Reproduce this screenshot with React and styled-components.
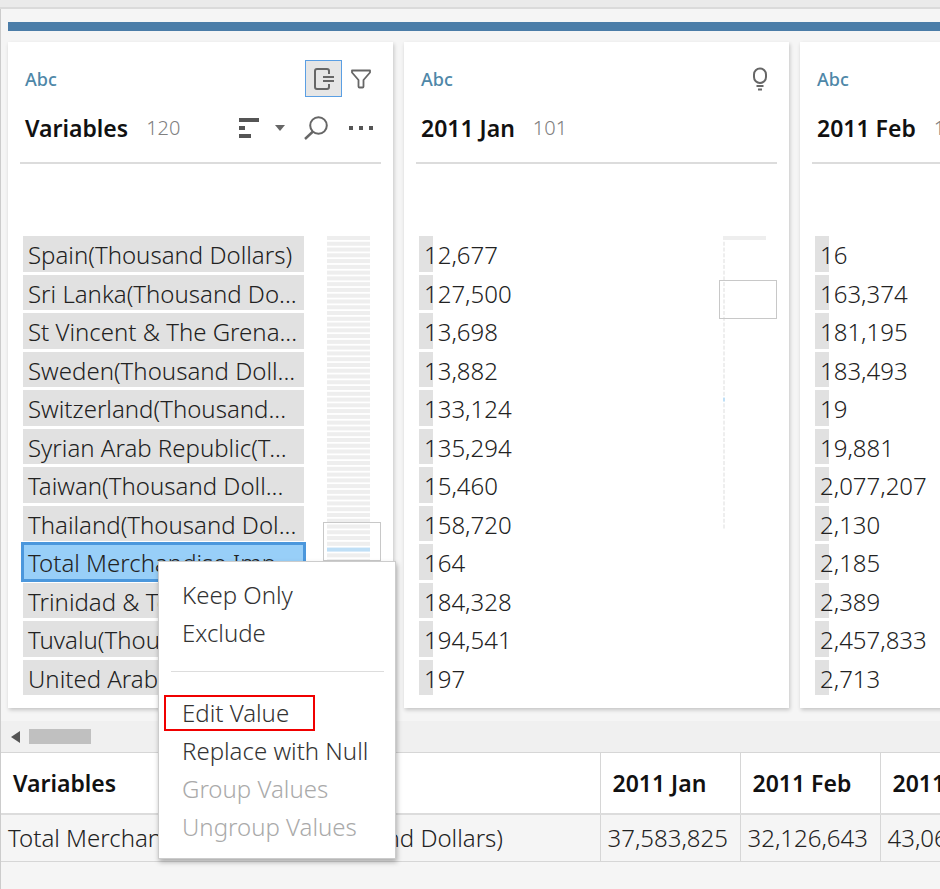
import React from "react";
import styled, { createGlobalStyle, css } from "styled-components";

const GlobalStyle = createGlobalStyle`
  *, *::before, *::after { box-sizing: border-box; }
  body { margin: 0; background: #f5f5f5; overflow-x: hidden; }
  body, button, table { font-family: "Noto Sans", "Open Sans", sans-serif; }
  button { border: 0; padding: 0; background: none; color: inherit; cursor: pointer; }
  ul { list-style: none; margin: 0; padding: 0; }
  svg { display: block; }
`;

const Page = styled.div`
  display: flex;
  flex-direction: column;
  min-height: 100vh;
  overflow: hidden;
  color: #333;
  font-size: 24px;
  line-height: 34px;
  font-weight: 300;
`;

const TopBand = styled.div`
  height: 9px;
  background: #eaeaea;
  border-bottom: 2px solid #dadada;
`;

const Workspace = styled.main`
  flex: 1;
  border-left: 1px solid #ccc;
`;

const ProfilePane = styled.section`
  padding: 13px 0 13px 7px;
`;

const StepStripe = styled.div`
  height: 9px;
  background: #4b7da8;
`;

const Cards = styled.div`
  display: flex;
  gap: 11px;
  padding-top: 11px;
`;

const Card = styled.article`
  flex: none;
  width: 385px;
  padding: 18px 12px 13px;
  background: #fff;
  box-shadow: 1px 2px 4px rgba(0, 0, 0, 0.2);
`;

const CardHead = styled.header`
  padding: 0 2px 14px 5px;
  border-bottom: 2px solid #dcdcdc;
`;

const HeadLine = styled.div`
  display: flex;
  align-items: center;
  height: ${(p) => (p.$lower ? "51px" : "37px")};
  padding-top: ${(p) => (p.$lower ? "10px" : "0")};
`;

const DataType = styled.span`
  margin-right: auto;
  font-size: 18px;
  font-weight: 500;
  color: #4e87a8;
`;

const FieldName = styled.h2`
  margin: 0 18px 0 0;
  font-size: 23px;
  font-weight: 600;
  color: #111;
`;

const Count = styled.span`
  margin-right: auto;
  font-size: 20px;
  color: #808080;
`;

const IconButton = styled.button`
  display: flex;
  align-items: center;
  justify-content: center;
  width: 37px;
  height: 37px;
  color: #666;
  ${(p) =>
    p.$pressed &&
    css`
      background: #e6e6e6;
      border: 1px solid #5b9fe3;
    `}
`;

const SmallButton = styled(IconButton)`
  width: ${(p) => p.$width}px;
`;

const MoreButton = styled(IconButton)`
  width: 45px;
  padding-right: 6px;
  justify-content: flex-end;
`;

const CardBody = styled.div`
  display: flex;
  gap: 19px;
  height: 459px;
  margin: 72px 0 0 3px;
`;

const ValueList = styled.ul`
  flex: 1;
  min-width: 0;
  display: flex;
  flex-direction: column;
  gap: 3px;
`;

const ValueItem = styled.li`
  position: relative;
  flex: 1;
  display: flex;
`;

const ValueButton = styled.button`
  flex: 1;
  min-width: 0;
  padding: 3px 5px 0;
  overflow: hidden;
  text-overflow: ellipsis;
  white-space: nowrap;
  text-align: left;
  font-size: 24px;
  font-weight: 300;
  line-height: 32px;
  color: #222;
  background: linear-gradient(#e1e1e1, #e1e1e1) 0 0 / ${(p) => (p.$full ? "100%" : "14px")} 100% no-repeat;
  ${(p) =>
    p.$selected &&
    css`
      background: #98cff8;
      outline: 3px solid #4b97dc;
      outline-offset: -1px;
    `}
`;

const Menu = styled.div`
  position: absolute;
  z-index: 2;
  top: 17px;
  left: 135px;
  display: flex;
  flex-direction: column;
  width: 238px;
  padding: 14px 0 12px;
  background: #fff;
  border: 1px solid #ccc;
  box-shadow: 1px 3px 5px rgba(0, 0, 0, 0.3);
`;

const MenuItem = styled.button`
  position: relative;
  height: 38px;
  padding: 0 0 2px 23px;
  text-align: left;
  white-space: nowrap;
  font-size: 24px;
  font-weight: 300;
  color: #333;
  &:disabled { color: #aaa; }
`;

const MenuRule = styled.hr`
  width: 213px;
  margin: 19px 12px 22px;
  border: 0;
  border-top: 1px solid #ddd;
`;

const Callout = styled.span`
  position: absolute;
  top: 1px;
  left: 5px;
  width: 151px;
  height: 36px;
  border: 2px solid #f00000;
`;

const ScrollTrack = styled.div`
  display: flex;
  align-items: center;
  gap: 9px;
  height: 31px;
  padding-left: 10px;
  background: #f0f0f0;
`;

const ScrollArrow = styled.button`
  color: #555;
`;

const ScrollThumb = styled.div`
  width: 62px;
  height: 15px;
  background: #c0c0c0;
`;

const Grid = styled.table`
  table-layout: fixed;
  width: 1019px;
  border-collapse: collapse;
  border-top: 1px solid #d6d6d6;
`;

const Col = styled.col`
  width: ${(p) => p.$width}px;
`;

const HeadCell = styled.th`
  height: 61px;
  padding: 0 12px;
  text-align: left;
  white-space: nowrap;
  font-size: 23px;
  font-weight: 600;
  color: #111;
  background: #fff;
  border-right: 1px solid #d6d6d6;
  border-bottom: 2px solid #dcdcdc;
`;

const Cell = styled.td`
  height: 48px;
  padding: 0 7px;
  white-space: nowrap;
  color: #222;
  border-right: 1px solid #d6d6d6;
  border-bottom: 1px solid #d6d6d6;
`;

const ExportIcon = () => (
  <svg width="20" height="22" viewBox="0 0 20 22" fill="none" stroke="currentColor" strokeWidth="2">
    <path d="M15 6V3Q15 1 13 1H3Q1 1 1 3V19Q1 21 3 21H13Q15 21 15 19V16" />
    <path d="M9 9h11M9 13h11" />
  </svg>
);

const FilterIcon = () => (
  <svg width="20" height="20" viewBox="0 0 20 20" fill="none" stroke="currentColor" strokeWidth="1.800" strokeLinejoin="round">
    <path d="M1 1.500h18v2L12.500 11v6.500q0 1-1 1h-3q-1 0-1-1V11L1 3.500z" />
  </svg>
);

const BulbIcon = () => (
  <svg width="16" height="24" viewBox="0 0 16 24" fill="none" stroke="currentColor" strokeWidth="2">
    <rect x="2" y="1.500" width="12" height="14.500" rx="6" />
    <path d="M4.500 19h7M6 22.500h4" />
  </svg>
);

const SortIcon = () => (
  <svg width="20" height="20" viewBox="0 0 20 20" fill="#555">
    <path d="M0 0h20v4H0zM0 8h6v4H0zM0 16h12v4H0z" />
  </svg>
);

const CaretIcon = () => (
  <svg width="10" height="6" viewBox="0 0 10 6" fill="currentColor">
    <path d="M0 0h10L5 6z" />
  </svg>
);

const SearchIcon = () => (
  <svg width="24" height="24" viewBox="0 0 24 24" fill="none" stroke="currentColor" strokeWidth="2">
    <circle cx="14.500" cy="9.500" r="8.300" />
    <path d="M9 15.500L1 23" strokeWidth="2.400" />
  </svg>
);

const MoreIcon = () => (
  <svg width="24" height="4" viewBox="0 0 24 4" fill="#555">
    <path d="M0 0h4v4H0zM10 0h4v4h-4zM20 0h4v4h-4z" />
  </svg>
);

const STEP = 5.77;

function Minimap({ rows, marked, windowY, wideRows }) {
  return (
    <svg width="58" height="459" viewBox="0 0 58 459" aria-hidden="true">
      {Array.from({ length: rows }, (_, i) => (
        <rect
          key={i}
          x="4"
          y={i * STEP}
          width={i < wideRows ? 43 : 2}
          height="4"
          fill={i === marked ? "#bfdff6" : "#eeeeee"}
        />
      ))}
      <rect x="0.500" y={windowY + 0.5} width="57" height="38" fill="none" stroke="#c8c8c8" />
    </svg>
  );
}

const variables = [
  "Spain(Thousand Dollars)",
  "Sri Lanka(Thousand Do...",
  "St Vincent & The Grena...",
  "Sweden(Thousand Doll...",
  "Switzerland(Thousand...",
  "Syrian Arab Republic(T...",
  "Taiwan(Thousand Doll...",
  "Thailand(Thousand Dol...",
  "Total Merchandise Imp...",
  "Trinidad & Tobago(Tho...",
  "Tuvalu(Thousand Doll...",
  "United Arab Emirates(...",
];

const january = [
  "12,677", "127,500", "13,698", "13,882", "133,124", "135,294",
  "15,460", "158,720", "164", "184,328", "194,541", "197",
];

const february = [
  "16", "163,374", "181,195", "183,493", "19", "19,881",
  "2,077,207", "2,130", "2,185", "2,389", "2,457,833", "2,713",
];

function ContextMenu() {
  return (
    <Menu role="menu">
      <MenuItem role="menuitem">Keep Only</MenuItem>
      <MenuItem role="menuitem">Exclude</MenuItem>
      <MenuRule />
      <MenuItem role="menuitem">
        Edit Value
        <Callout />
      </MenuItem>
      <MenuItem role="menuitem">Replace with Null</MenuItem>
      <MenuItem role="menuitem" disabled>Group Values</MenuItem>
      <MenuItem role="menuitem" disabled>Ungroup Values</MenuItem>
    </Menu>
  );
}

function FieldCard({ name, count, values, full, selected, topTools, tools, minimap }) {
  return (
    <Card>
      <CardHead>
        <HeadLine>
          <DataType>Abc</DataType>
          {topTools}
        </HeadLine>
        <HeadLine $lower>
          <FieldName>{name}</FieldName>
          <Count>{count}</Count>
          {tools}
        </HeadLine>
      </CardHead>
      <CardBody>
        <ValueList>
          {values.map((value, i) => (
            <ValueItem key={value}>
              <ValueButton $full={full} $selected={i === selected}>{value}</ValueButton>
              {i === selected && <ContextMenu />}
            </ValueItem>
          ))}
        </ValueList>
        {minimap}
      </CardBody>
    </Card>
  );
}

export default function App() {
  return (
    <Page>
      <GlobalStyle />
      <TopBand />
      <Workspace>
        <ProfilePane>
          <StepStripe />
          <Cards>
            <FieldCard
              name="Variables"
              count="120"
              values={variables}
              full
              selected={8}
              topTools={
                <>
                  <IconButton $pressed aria-label="Show details" aria-pressed="true"><ExportIcon /></IconButton>
                  <IconButton aria-label="Filter"><FilterIcon /></IconButton>
                </>
              }
              tools={
                <>
                  <SmallButton $width={26} aria-label="Sort"><SortIcon /></SmallButton>
                  <SmallButton $width={36} aria-label="Sort options"><CaretIcon /></SmallButton>
                  <SmallButton $width={36} aria-label="Search"><SearchIcon /></SmallButton>
                  <MoreButton aria-label="More options"><MoreIcon /></MoreButton>
                </>
              }
              minimap={<Minimap rows={60} wideRows={60} marked={54} windowY={286} />}
            />
            <FieldCard
              name="2011 Jan"
              count="101"
              values={january}
              topTools={
                <SmallButton $width={30} aria-label="Recommendations"><BulbIcon /></SmallButton>
              }
              minimap={<Minimap rows={51} wideRows={1} marked={28} windowY={44} />}
            />
            <FieldCard
              name="2011 Feb"
              count="101"
              values={february}
              minimap={<Minimap rows={51} wideRows={1} marked={28} windowY={44} />}
            />
          </Cards>
        </ProfilePane>
        <ScrollTrack>
          <ScrollArrow aria-label="Scroll left">
            <svg width="9" height="12" viewBox="0 0 9 12" fill="currentColor">
              <path d="M9 0v12L0 6z" />
            </svg>
          </ScrollArrow>
          <ScrollThumb />
        </ScrollTrack>
        <Grid>
          <colgroup>
            <Col $width={599} />
            <Col $width={140} />
            <Col $width={140} />
            <Col $width={140} />
          </colgroup>
          <thead>
            <tr>
              <HeadCell scope="col">Variables</HeadCell>
              <HeadCell scope="col">2011 Jan</HeadCell>
              <HeadCell scope="col">2011 Feb</HeadCell>
              <HeadCell scope="col">2011 Mar</HeadCell>
            </tr>
          </thead>
          <tbody>
            <tr>
              <Cell>Total Merchandise Imports(Thousand Dollars)</Cell>
              <Cell>37,583,825</Cell>
              <Cell>32,126,643</Cell>
              <Cell>43,06</Cell>
            </tr>
          </tbody>
        </Grid>
      </Workspace>
    </Page>
  );
}
